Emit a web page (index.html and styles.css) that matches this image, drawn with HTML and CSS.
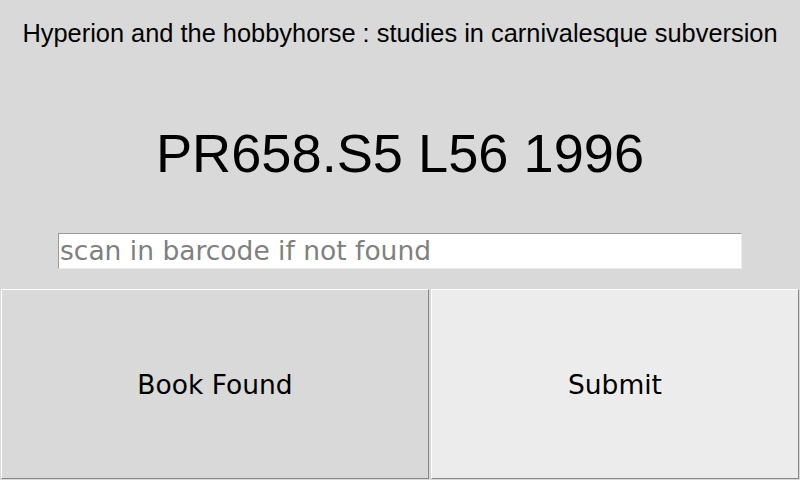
FILE: index.html
```html
<!DOCTYPE html>
<html>
<head>
<meta charset="utf-8">
<link rel="stylesheet" href="styles.css">
</head>
<body>
<div class="app">
  <div class="title">Hyperion and the hobbyhorse : studies in carnivalesque subversion</div>
  <div class="callno">PR658.S5 L56 1996</div>
  <div class="entry-row">
    <input class="entry" type="text" placeholder="scan in barcode if not found">
  </div>
  <div class="buttons">
    <div class="cell"><button class="btn">Book Found</button></div>
    <div class="cell"><button class="btn active">Submit</button></div>
  </div>
</div>
</body>
</html>
```

FILE: styles.css
```css
html, body {
  margin: 0;
  padding: 0;
  background: #d9d9d9;
}
.app {
  width: 800px;
  height: 480px;
  display: flex;
  flex-direction: column;
  background: #d9d9d9;
  overflow: hidden;
}
.title {
  margin-top: 18px;
  height: 30px;
  line-height: 30px;
  text-align: center;
  font-family: "Liberation Sans", Arial, sans-serif;
  font-size: 25.4px;
  color: #000;
  white-space: nowrap;
}
.callno {
  margin-top: 75px;
  height: 60px;
  line-height: 60px;
  text-align: center;
  font-family: "Liberation Sans", Arial, sans-serif;
  font-size: 54.2px;
  color: #000;
  white-space: nowrap;
}
.entry-row {
  margin-top: 50px;
  padding-left: 58px;
  height: 36px;
}
.entry {
  box-sizing: border-box;
  width: 684px;
  height: 36px;
  margin: 0;
  padding: 0 0 1px 1px;
  border: 1px solid;
  border-color: #9a9a9a #ececec #ececec #9a9a9a;
  background: #fff;
  font-family: "DejaVu Sans", sans-serif;
  font-size: 26.5px;
  color: #000;
  outline: none;
}
.entry::placeholder {
  color: #808080;
  opacity: 1;
}
.buttons {
  margin-top: 19px;
  display: grid;
  grid-template-columns: 430px 370px;
  height: 192px;
}
.cell {
  padding: 1px;
  display: flex;
}
.btn {
  flex: 1;
  margin: 0;
  padding: 0;
  box-sizing: border-box;
  border: 1px solid;
  border-color: #ffffff #878787 #878787 #ffffff;
  background: #d9d9d9;
  font-family: "DejaVu Sans", sans-serif;
  font-size: 26.5px;
  color: #000;
  cursor: default;
}
.btn.active {
  background: #ececec;
}
```
